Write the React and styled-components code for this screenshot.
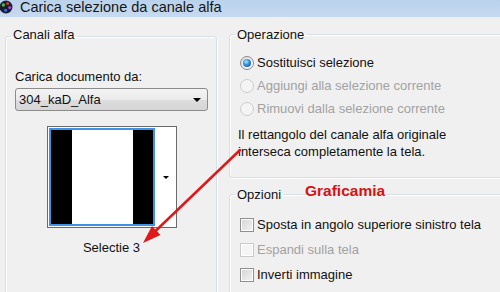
import React from 'react';
import styled, { createGlobalStyle } from 'styled-components';

const GlobalStyle = createGlobalStyle`
  html, body {
    margin: 0;
    padding: 0;
  }
  body {
    width: 500px;
    height: 292px;
    overflow: hidden;
    background: #f0f0f0;
    font-family: "Liberation Sans", Arial, sans-serif;
    font-size: 13px;
    color: #111;
  }
`;

const Window = styled.div`
  position: relative;
  width: 500px;
  height: 292px;
  overflow: hidden;
  display: flex;
  flex-direction: column;
`;

const TitleBar = styled.div`
  flex: none;
  height: 17px;
  display: flex;
  align-items: flex-start;
  gap: 6px;
  background: linear-gradient(#bad2ec, #c6daf0);
`;

const TitleText = styled.div`
  font-size: 14.5px;
  line-height: 14px;
  color: #151515;
`;

const Body = styled.div`
  display: flex;
  align-items: flex-start;
  gap: 12px;
  padding: 10px 0 0 5px;
`;

const GroupBox = styled.fieldset`
  margin: ${p => p.$top || 0}px 0 0;
  padding: 0;
  min-width: 0;
  flex: none;
  box-sizing: border-box;
  width: ${p => p.$width}px;
  height: ${p => (p.$height ? `${p.$height}px` : 'auto')};
  border: 1px solid #d5dfe5;
  border-radius: 3px;
  box-shadow: inset 1px 1px 0 #fff, 1px 1px 0 #fff;
`;

const Legend = styled.legend`
  margin-left: 5px;
  padding: ${p => (p.$tall ? '0 3px 3px 2px' : '0 3px 0 2px')};
  line-height: 15px;
`;

const LeftContent = styled.div`
  display: flex;
  flex-direction: column;
  padding: 24px 8px 0 9px;
`;

const Label = styled.div`
  line-height: 15px;
`;

const Combo = styled.div`
  margin-top: 4px;
  height: 23px;
  box-sizing: border-box;
  display: flex;
  align-items: center;
  justify-content: space-between;
  padding: 0 6px 0 3px;
  border: 1px solid #8c8c8c;
  border-radius: 3px;
  background: linear-gradient(#f3f3f3 0%, #ebebeb 50%, #dddddd 51%, #d6d6d6 100%);
`;

const DownArrow = styled.span`
  width: 0;
  height: 0;
  border-left: ${p => p.$size}px solid transparent;
  border-right: ${p => p.$size}px solid transparent;
  border-top: ${p => p.$size}px solid #000;
`;

const ThumbFrame = styled.div`
  align-self: center;
  margin-top: 15px;
  width: 130px;
  height: 102px;
  box-sizing: border-box;
  display: flex;
  align-items: center;
  border: 1px solid #6a6a6a;
  background: #fff;
`;

const Thumb = styled.div`
  flex: none;
  align-self: flex-start;
  margin: 1px 0 0 1px;
  width: 106px;
  height: 98px;
  box-sizing: border-box;
  border: 2px solid #3d94e6;
  display: grid;
  grid-template-columns: 21px 1fr 20px;
`;

const ThumbBand = styled.div`
  background: ${p => (p.$black ? '#000' : '#fff')};
`;

const ThumbButton = styled.div`
  flex: 1;
  display: flex;
  justify-content: center;
  padding-left: 1px;
`;

const Caption = styled.div`
  margin-top: 12px;
  line-height: 15px;
  text-align: center;
`;

const RightColumn = styled.div`
  display: flex;
  flex-direction: column;
`;

const GroupContent = styled.div`
  display: flex;
  flex-direction: column;
  padding: ${p => p.$pad};
`;

const OptionRow = styled.div`
  height: ${p => p.$h}px;
  margin-left: 2px;
  display: flex;
  align-items: center;
  gap: 3px;
  white-space: nowrap;
  color: ${p => (p.$disabled ? '#a2a2a2' : '#111')};
`;

const Radio = styled.span`
  flex: none;
  width: 14px;
  height: 14px;
  box-sizing: border-box;
  border-radius: 50%;
  border: 1px solid ${p => (p.$disabled ? '#cdcdcd' : '#8a8a8a')};
  background: ${p => (p.$disabled ? '#f4f4f4' : 'linear-gradient(135deg, #dcdcdc, #ffffff)')};
  display: flex;
  align-items: center;
  justify-content: center;

  &::after {
    content: '';
    display: ${p => (p.$checked ? 'block' : 'none')};
    width: 8px;
    height: 8px;
    border-radius: 50%;
    background: radial-gradient(circle at 40% 35%, #b6ecff 0, #3596e4 40%, #0c3f88 100%);
  }
`;

const Check = styled.span`
  flex: none;
  width: 14px;
  height: 14px;
  box-sizing: border-box;
  border: 1px solid ${p => (p.$disabled ? '#cacaca' : '#8e8f8f')};
  box-shadow: inset 0 0 0 1px #fff;
  background: ${p => (p.$disabled ? '#f5f5f5' : 'linear-gradient(135deg, #d4d4d4, #f4f4f4)')};
`;

const Note = styled.p`
  margin: 6px 0 0;
  line-height: 17px;
`;

const Annotation = styled.svg`
  position: absolute;
  left: 0;
  top: 0;
  pointer-events: none;
`;

const Watermark = styled.span`
  position: absolute;
  left: 305px;
  top: 182px;
  font-size: 15.5px;
  line-height: 18px;
  font-weight: 700;
  color: #dc1010;
`;

const AppIcon = () => (
  <svg width="14" height="14" viewBox="0 0 14 14">
    <circle cx="6" cy="7" r="6.5" fill="#1c1c30" />
    <circle cx="3.4" cy="5" r="1.7" fill="#3fc03f" />
    <circle cx="7.6" cy="3.6" r="1.5" fill="#e03434" />
    <circle cx="9.8" cy="7.6" r="1.7" fill="#9a44d6" />
    <circle cx="5.6" cy="10.2" r="1.5" fill="#2f72e2" />
  </svg>
);

const radios = [
  { label: 'Sostituisci selezione', checked: true },
  { label: 'Aggiungi alla selezione corrente', disabled: true },
  { label: 'Rimuovi dalla selezione corrente', disabled: true },
];

const checks = [
  { label: 'Sposta in angolo superiore sinistro tela' },
  { label: 'Espandi sulla tela', disabled: true },
  { label: 'Inverti immagine' },
];

export default function App() {
  return (
    <Window>
      <GlobalStyle />
      <TitleBar>
        <AppIcon />
        <TitleText>Carica selezione da canale alfa</TitleText>
      </TitleBar>
      <Body>
        <GroupBox $width={212} $height={320}>
          <Legend $tall>Canali alfa</Legend>
          <LeftContent>
            <Label>Carica documento da:</Label>
            <Combo>
              <span>304_kaD_Alfa</span>
              <DownArrow $size={4.5} />
            </Combo>
            <ThumbFrame>
              <Thumb>
                <ThumbBand $black />
                <ThumbBand />
                <ThumbBand $black />
              </Thumb>
              <ThumbButton>
                <DownArrow $size={3} />
              </ThumbButton>
            </ThumbFrame>
            <Caption>Selectie 3</Caption>
          </LeftContent>
        </GroupBox>
        <RightColumn>
          <GroupBox $width={290}>
            <Legend>Operazione</Legend>
            <GroupContent $pad="9px 0 17px 8px">
              {radios.map(r => (
                <OptionRow key={r.label} $h={23} $disabled={r.disabled}>
                  <Radio $checked={r.checked} $disabled={r.disabled} />
                  {r.label}
                </OptionRow>
              ))}
              <Note>
                Il rettangolo del canale alfa originale
                <br />
                interseca completamente la tela.
              </Note>
            </GroupContent>
          </GroupBox>
          <GroupBox $width={290} $height={140} $top={9}>
            <Legend>Opzioni</Legend>
            <GroupContent $pad="10px 0 0 8px">
              {checks.map(c => (
                <OptionRow key={c.label} $h={25} $disabled={c.disabled}>
                  <Check $disabled={c.disabled} />
                  {c.label}
                </OptionRow>
              ))}
            </GroupContent>
          </GroupBox>
        </RightColumn>
      </Body>
      <Annotation width="500" height="292" viewBox="0 0 500 292">
        <line x1="240" y1="150" x2="155" y2="231.5" stroke="#e01818" strokeWidth="2.5" strokeLinecap="round" />
        <polygon points="143,243 160.5,235 152,226" fill="#e01818" />
      </Annotation>
      <Watermark>Graficamia</Watermark>
    </Window>
  );
}
